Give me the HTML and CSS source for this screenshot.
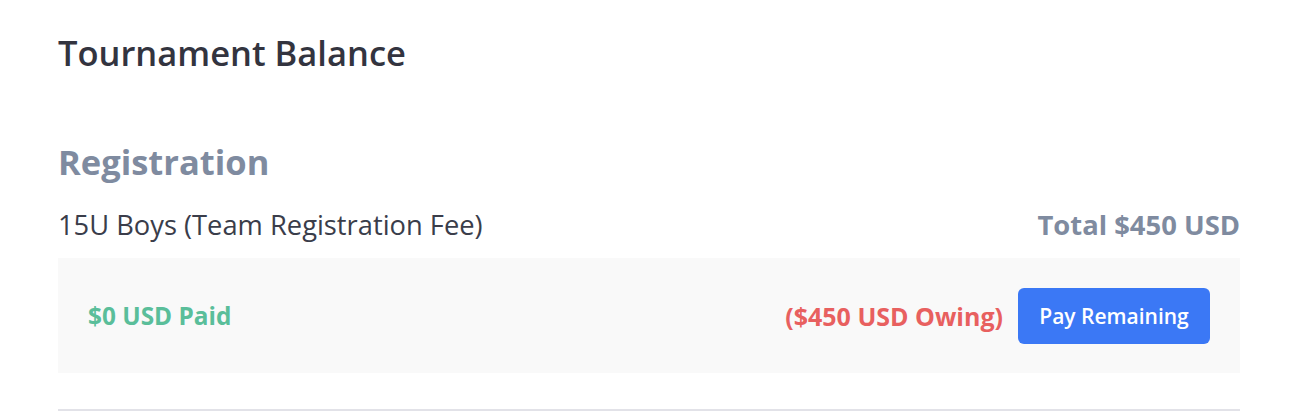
FILE: index.html
```html
<!DOCTYPE html>
<html>
<head>
<meta charset="utf-8">
<link rel="stylesheet" href="styles.css">
</head>
<body>
<div class="panel">
  <h1 class="title">Tournament Balance</h1>
  <section class="section">
    <h2 class="section-title">Registration</h2>
    <div class="line">
      <span class="item-name">15U Boys (Team Registration Fee)</span>
      <span class="total">Total $450 USD</span>
    </div>
    <div class="balance">
      <span class="paid">$0 USD Paid</span>
      <div class="balance-right">
        <span class="owing">($450 USD Owing)</span>
        <button class="pay-btn">Pay Remaining</button>
      </div>
    </div>
  </section>
  <div class="divider"></div>
</div>
</body>
</html>
```
FILE: styles.css
```css
html, body {
  margin: 0;
  padding: 0;
  background: #ffffff;
}
body {
  font-family: "Open Sans", Lato, sans-serif;
}
.panel {
  margin: 0 58px;
  padding-top: 30px;
}
.title {
  margin: 0;
  font-size: 34.5px;
  font-weight: 600;
  color: #33343f;
  line-height: 46px;
}
.section {
  margin-top: 64px;
}
.section-title {
  margin: 0;
  font-size: 34.5px;
  font-weight: 700;
  color: #7f8ba0;
  line-height: 44px;
}
.line {
  display: flex;
  justify-content: space-between;
  align-items: center;
  margin-top: 20px;
  height: 40px;
}
.item-name {
  font-size: 27.3px;
  font-weight: 400;
  color: #3a3d4a;
}
.total {
  font-size: 27.4px;
  font-weight: 700;
  color: #7f8ba0;
}
.balance {
  margin-top: 14px;
  background: #f9f9f9;
  height: 115px;
  display: flex;
  justify-content: space-between;
  align-items: center;
  padding: 0 30px;
}
.paid {
  font-size: 24.4px;
  font-weight: 700;
  color: #5abe9a;
}
.balance-right {
  display: flex;
  align-items: center;
  gap: 15px;
}
.owing {
  font-size: 25px;
  font-weight: 700;
  color: #e8605f;
}
.pay-btn {
  font-family: "Open Sans", Lato, sans-serif;
  font-size: 21px;
  font-weight: 600;
  color: #ffffff;
  background: #3b78f5;
  border: none;
  border-radius: 6px;
  height: 56px;
  width: 192px;
  padding: 0;
}
.divider {
  margin-top: 36px;
  height: 2px;
  background: #e2e2e8;
}
```
